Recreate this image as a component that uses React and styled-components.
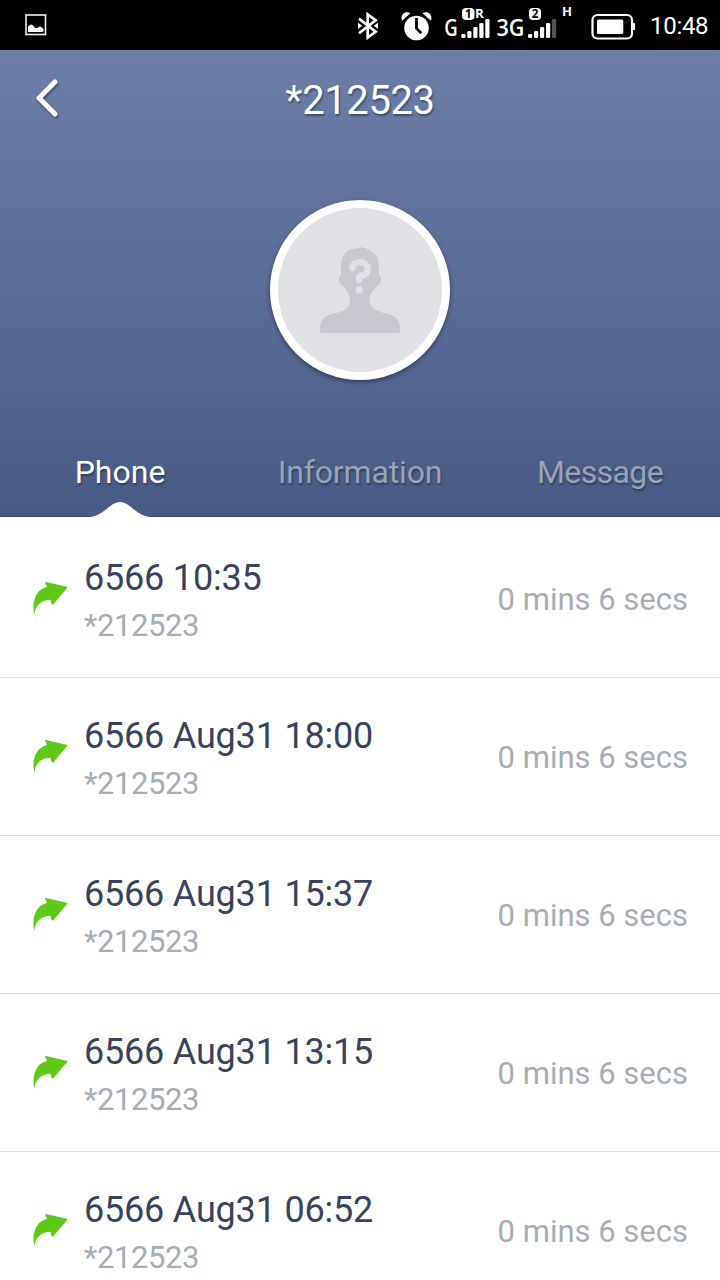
import styled, { createGlobalStyle, css } from 'styled-components'
import { useState } from 'react'

const CONTACT = '*212523';

const TABS = [
  { name: 'Phone', spacing: 0 },
  { name: 'Information', spacing: -0.15 },
  { name: 'Message', spacing: -0.6 },
];

const CALLS = [
  { id: 1, title: '6566 10:35', duration: '0 mins 6 secs' },
  { id: 2, title: '6566 Aug31 18:00', duration: '0 mins 6 secs' },
  { id: 3, title: '6566 Aug31 15:37', duration: '0 mins 6 secs' },
  { id: 4, title: '6566 Aug31 13:15', duration: '0 mins 6 secs' },
  { id: 5, title: '6566 Aug31 06:52', duration: '0 mins 6 secs' },
];

export default function App() {
  const [active, setActive] = useState('Phone');

  return (
    <Screen>
      <GlobalStyle />
      <StatusBar>
        <PictureIcon />
        <StatusRight>
          <BluetoothIcon />
          <AlarmIcon />
          <SignalIcons />
          <BatteryIcon />
          <Clock>10:48</Clock>
        </StatusRight>
      </StatusBar>

      <Header>
        <TitleBar>
          <BackButton aria-label="Back">
            <svg width="30" height="44" viewBox="0 0 30 44">
              <path d="M23 6 L7 22 L23 38" fill="none" stroke="#fff" strokeWidth="5" strokeLinecap="round" strokeLinejoin="round" />
            </svg>
          </BackButton>
          <Title>{CONTACT}</Title>
        </TitleBar>
        <AvatarArea>
          <Avatar>
            <PersonIcon />
          </Avatar>
        </AvatarArea>
        <Tabs>
          {TABS.map(({ name, spacing }) => (
            <Tab key={name} $active={name === active} $spacing={spacing} onClick={() => setActive(name)}>
              {name}
              {name === active && (
                <Notch width="60" height="16" viewBox="0 0 60 16">
                  <path d="M0 16 C15 14 20 1 30 1 C40 1 45 14 60 16 Z" fill="#fff" />
                </Notch>
              )}
            </Tab>
          ))}
        </Tabs>
      </Header>

      <CallList>
        {CALLS.map((call) => (
          <CallRow key={call.id}>
            <OutgoingIcon />
            <CallInfo>
              <CallTitle>{call.title}</CallTitle>
              <CallNumber>{CONTACT}</CallNumber>
            </CallInfo>
            <Duration>{call.duration}</Duration>
          </CallRow>
        ))}
      </CallList>
    </Screen>
  )
}

function PictureIcon() {
  return (
    <svg width="22" height="22" viewBox="0 0 22 22">
      <rect x="1" y="1" width="19.5" height="19.5" fill="none" stroke="#f0f0f0" strokeWidth="1.6" />
      <path d="M3 18 V12.500 L5 11 L6.500 10.500 L8.500 12 L10 14 L12.500 14 L14 12.700 H16 L18.500 15 V17 L17.500 18 Z" fill="#fff" />
    </svg>
  )
}

function BluetoothIcon() {
  return (
    <svg width="20" height="30" viewBox="358 11 20 30">
      <path d="M359 18.600 L375.600 31.800 L367.700 37.500 V14.500 L375.600 20.200 L359 33.200" fill="none" stroke="#fff" strokeWidth="2.7" />
      <path d="M358 22.700 L362.200 25.800 L358 28.900 Z M378 22.700 L373.800 25.800 L378 28.900 Z" fill="#fff" />
    </svg>
  )
}

function AlarmIcon() {
  return (
    <svg width="31" height="30" viewBox="400.5 11 31 30">
      <circle cx="416" cy="28" r="12.3" fill="#fff" />
      <path d="M401.500 20.800 C399.500 14.500 404.500 10.500 410 13.200 Z M430.500 20.800 C432.500 14.500 427.500 10.500 422 13.200 Z" fill="#fff" />
      <path d="M416 18 V28.500 L420.800 33.200" fill="none" stroke="#000" strokeWidth="2.8" />
    </svg>
  )
}

function Bars({ x, dimLast }) {
  const heights = [4, 7, 11, 15, 19];
  return heights.map((h, i) => (
    <rect key={h} x={x + i * 6} y={38 - h} width="4.2" height={h} rx="1.3" fill={dimLast && i === 4 ? '#555' : '#fff'} />
  ))
}

function SignalIcons() {
  return (
    <SignalSvg width="130" height="42" viewBox="444 1 130 42">
      <text x="444.3" y="36" fontSize="23.5" textLength="13.5" lengthAdjust="spacingAndGlyphs">G</text>
      <rect x="462" y="8" width="12.5" height="12" rx="4" fill="#fff" />
      <Small x="468.2" y="18" textAnchor="middle" $dark>1</Small>
      <Small x="475" y="18" textLength="8.8" lengthAdjust="spacingAndGlyphs">R</Small>
      <Bars x={461.3} />
      <text x="496.4" y="36" fontSize="23.5" textLength="28" lengthAdjust="spacingAndGlyphs">3G</text>
      <rect x="529" y="8" width="12" height="12" rx="4" fill="#fff" />
      <Small x="535" y="18" textAnchor="middle" $dark>2</Small>
      <Bars x={528} dimLast />
      <Small x="562" y="16.2" textLength="10" lengthAdjust="spacingAndGlyphs">H</Small>
    </SignalSvg>
  )
}

function BatteryIcon() {
  return (
    <svg width="45" height="28" viewBox="591 13 45 28">
      <rect x="592.5" y="15" width="39.5" height="23.5" rx="5" fill="none" stroke="#fff" strokeWidth="2.2" />
      <rect x="597" y="19.5" width="26.3" height="14.5" rx="1.5" fill="#fff" />
      <rect x="632.5" y="23" width="2.6" height="7" rx="1" fill="#fff" />
    </svg>
  )
}

function PersonIcon() {
  return (
    <svg width="80" height="86.67" viewBox="180 170 240 260">
      <path
        d="M180 413 C180 391 192 376 216 371 C244 366 271 355 270 333 C270 316 262 303 252 290
           C242 286 236 276 236 266 C236 260 239 257 243 257 V226 C243 196 262 173 296 174
           L305 170 L309 173 L320 174 L318 177 L334 180 L331 183 L344 188 L342 191 L351 197 L349 199
           L355 206 L353 209 C356 216 357 226 357 257 C361 257 363 260 363 266 C363 277 357 287 347 291
           C337 303 328 316 328 333 C328 355 357 366 384 371 C408 376 420 391 420 413 V421
           Q420 430 411 430 H189 Q180 430 180 421 Z"
        fill="#c7c8d0"
      />
      <path d="M276 233 C280 220 288 215.500 299 215.500 C314 215.500 323.500 225 323.500 237 C323.500 248 316 255 307 255 C300 255 297.500 258 297.500 263 V270" fill="none" stroke="#e0e1e5" strokeWidth="19" strokeLinecap="round" />
      <circle cx="298" cy="298" r="11" fill="#e0e1e5" />
    </svg>
  )
}

function OutgoingIcon() {
  return (
    <ArrowSvg width="36" height="35" viewBox="12 15 108 105">
      <path d="M19 116 C10 78 24 40 57 33 L51 20 Q51 18 54 18 L116 32 Q120 34 117 37 L76 85 Q73 87 71 84 L67 71 C38 72 22 88 19 116 Z" fill="#5ec917" />
    </ArrowSvg>
  )
}

const GlobalStyle = createGlobalStyle`
  body {
    margin: 0;
    background: #fff;
    font-family: Roboto, "Liberation Sans", sans-serif;
  }
`;

const softShadow = css`
  text-shadow: 1px 2px 2px rgba(20, 30, 60, 0.5);
`;

const Screen = styled.div`
  width: 720px;
  height: 1280px;
  overflow: hidden;
  display: flex;
  flex-direction: column;
`;

const StatusBar = styled.div`
  height: 50px;
  flex: none;
  box-sizing: border-box;
  padding: 0 12px 0 25px;
  display: flex;
  align-items: center;
  justify-content: space-between;
  background: #000;
`;

const StatusRight = styled.div`
  display: flex;
  align-items: center;
  height: 50px;

  svg:nth-child(1) { margin: 2px 22.5px 0 0; }
  svg:nth-child(2) { margin: 2px 12.5px 0 0; }
  svg:nth-child(3) { margin: -6px 17px 0 0; }
  svg:nth-child(4) { margin: 4px 14px 0 0; }
`;

const SignalSvg = styled.svg`
  fill: #fff;
  font-family: "Open Sans", Roboto, sans-serif;
  font-weight: 600;
`;

const Small = styled.text`
  font-size: 11.5px;
  font-weight: 700;
  fill: ${(p) => (p.$dark ? '#000' : '#fff')};
`;

const Clock = styled.span`
  color: #fff;
  font-size: 24px;
  line-height: 28px;
  letter-spacing: -0.3px;
  width: 58px;
  margin-top: 2px;
  white-space: nowrap;
`;

const Header = styled.header`
  height: 467px;
  flex: none;
  box-sizing: border-box;
  display: flex;
  flex-direction: column;
  background: linear-gradient(#6d7ea8, #475a86);
  border-bottom: 1px solid #3b4d78;
`;

const TitleBar = styled.div`
  height: 100px;
  display: grid;
  grid-template-columns: 90px 1fr 90px;
  align-items: center;
`;

const BackButton = styled.button`
  border: 0;
  background: none;
  padding: 0 0 4px 32px;
  display: flex;
  filter: drop-shadow(1px 2px 1px rgba(20, 30, 60, 0.5));
`;

const Title = styled.h1`
  margin: 0;
  padding-top: 2px;
  color: #fff;
  font-size: 40px;
  font-weight: 400;
  line-height: 48px;
  letter-spacing: -0.4px;
  text-align: center;
  ${softShadow}
`;

const AvatarArea = styled.div`
  flex: 1;
  display: flex;
  justify-content: center;
  align-items: flex-start;
  padding-top: 50px;
`;

const Avatar = styled.div`
  width: 180px;
  height: 180px;
  box-sizing: border-box;
  border: 8px solid #fff;
  border-radius: 50%;
  background: #e0e1e5;
  display: flex;
  align-items: center;
  justify-content: center;
  box-shadow: 0 2px 4px rgba(20, 30, 60, 0.6);
`;

const Tabs = styled.nav`
  height: 90px;
  display: grid;
  grid-template-columns: repeat(3, 1fr);
`;

const Tab = styled.button`
  position: relative;
  border: 0;
  background: none;
  padding: 2px 0 0;
  font-family: inherit;
  font-size: 32px;
  letter-spacing: ${(p) => p.$spacing}px;
  color: ${(p) => (p.$active ? '#fff' : '#9ba3b6')};
  ${softShadow}
`;

/* white bump that joins the active tab to the list */
const Notch = styled.svg`
  position: absolute;
  left: 50%;
  bottom: -1px;
  transform: translateX(-50%);
`;

const CallList = styled.div`
  padding-top: 3px;
  background: #fff;
`;

const CallRow = styled.div`
  height: 158px;
  box-sizing: border-box;
  padding: 0 32px;
  display: flex;
  align-items: center;
  border-bottom: 1px solid #dcdce6;
`;

const ArrowSvg = styled.svg`
  flex: none;
  margin-right: 16px;
`;

const CallInfo = styled.div`
  flex: 1;
  padding-top: 6px;
`;

const CallTitle = styled.div`
  color: #37435e;
  font-size: 36px;
  line-height: 48px;
  letter-spacing: -0.2px;
`;

const CallNumber = styled.div`
  color: #a7abb4;
  font-size: 31px;
  line-height: 48px;
  letter-spacing: -0.4px;
`;

const Duration = styled.div`
  padding-top: 2px;
  color: #a7abb4;
  font-size: 31px;
`;
